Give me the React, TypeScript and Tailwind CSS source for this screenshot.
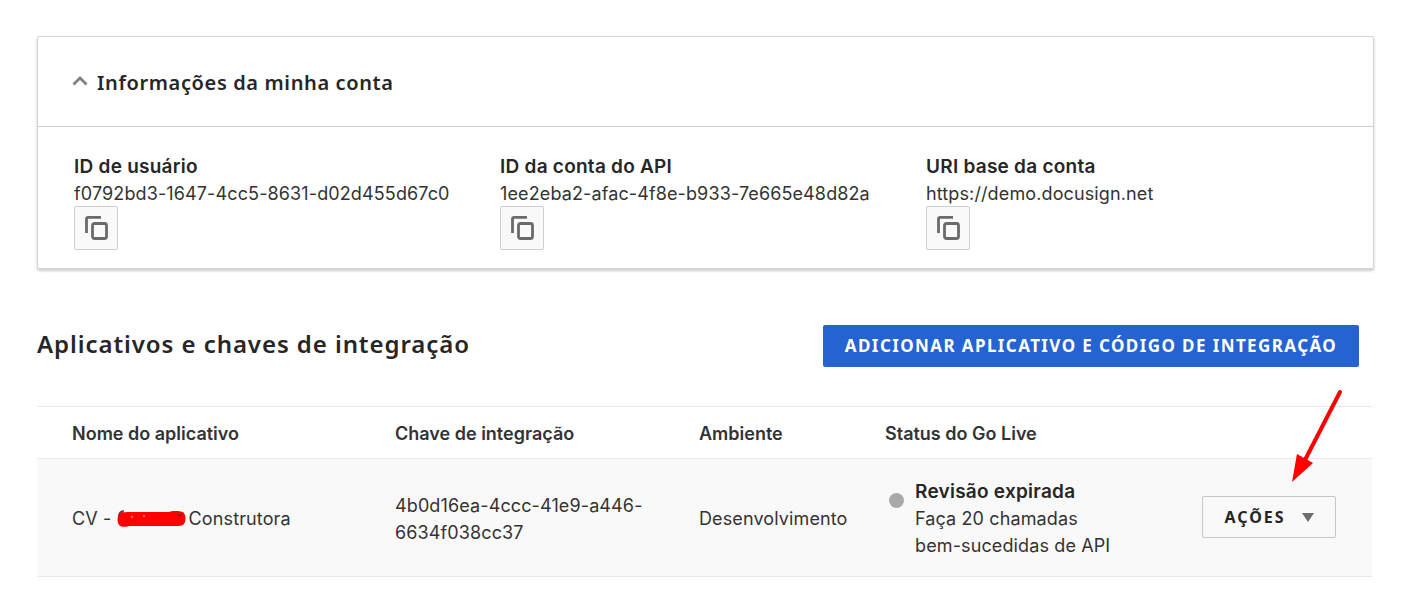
import React from 'react';

const bodyFont = "font-['Inter',Arial,sans-serif]";
const headingFont = "font-['Noto_Sans',sans-serif]";

function CopyIcon() {
    return (
        <svg width="23" height="24" viewBox="0 0 23 24" fill="none" stroke="#6a6a6a" strokeWidth="2.8">
            <path d="M1.5 17V2.9a1.5 1.5 0 0 1 1.5-1.5H16" />
            <rect x="7.5" y="7.5" width="14" height="15" rx="2" />
        </svg>
    );
}

function AccountField({ label, value }: { label: string; value: string }) {
    return (
        <div className="w-[426px] shrink-0">
            <div className="text-[19px] leading-[27px] font-semibold tracking-[0.25px] text-[#262626]">{label}</div>
            <div className="text-[18px] leading-[27px] tracking-[0.12px] text-[#333333]">{value}</div>
            <button className="w-[44px] h-[44px] -mt-[1px] flex items-center justify-center bg-[#f9f9f9] border border-[#d0cece] rounded-[2px]">
                <CopyIcon />
            </button>
        </div>
    );
}

export default function App() {
    return (
        <div className={`relative w-[1406px] h-[600px] overflow-hidden bg-white pt-[36px] pl-[37px] ${bodyFont}`}>
            {/* Account info card */}
            <div className="w-[1337px] h-[233px] bg-white border border-[#d5d3d3] rounded-[2px] shadow-[0_2px_3px_rgba(0,0,0,0.2)]">
                <div className="h-[90px] flex items-center pl-[34px] border-b border-[#cfcdcd]">
                    <svg width="16" height="10" viewBox="0 0 16 10" fill="none" stroke="#808080" strokeWidth="2.8" className="mr-[9px] mb-[2px]">
                        <path d="M1.5 8.5 8 2l6.5 6.5" />
                    </svg>
                    <h2 className={`text-[20px] font-semibold tracking-[0.63px] text-[#262626] mt-[2px] ${headingFont}`}>Informações da minha conta</h2>
                </div>
                <div className="flex pl-[36px] pt-[26px]">
                    <AccountField label="ID de usuário" value="f0792bd3-1647-4cc5-8631-d02d455d67c0" />
                    <AccountField label="ID da conta do API" value="1ee2eba2-afac-4f8e-b933-7e665e48d82a" />
                    <AccountField label="URI base da conta" value="https://demo.docusign.net" />
                </div>
            </div>

            {/* Section heading */}
            <div className="w-[1322px] h-[137px] flex items-center justify-between">
                <h2 className={`text-[24px] font-semibold tracking-[0.93px] text-[#262626] mt-[13px] ${headingFont}`}>Aplicativos e chaves de integração</h2>
                <button className={`h-[42px] w-[536px] mt-[16px] bg-[#2463d1] rounded-[2px] text-white text-[17px] font-bold tracking-[1.4px] ${headingFont}`}>
                    ADICIONAR APLICATIVO E CÓDIGO DE INTEGRAÇÃO
                </button>
            </div>

            {/* Apps table */}
            <div className="w-[1335px]">
                <div className="grid grid-cols-[323px_304px_186px_1fr] h-[53px] items-center pl-[35px] pt-[1px] border-y border-[#e9e9e9] text-[18px] font-semibold text-[#333333]">
                    <div>Nome do aplicativo</div>
                    <div>Chave de integração</div>
                    <div>Ambiente</div>
                    <div>Status do Go Live</div>
                </div>
                <div className="grid grid-cols-[323px_304px_186px_1fr] h-[118px] items-center pl-[35px] bg-[#f9f9f9] border-b border-[#e9e9e9] text-[18px] leading-[27px] tracking-[0.12px] text-[#333333]">
                    <div className="flex items-center pt-[2px]">
                        <span className="whitespace-pre">CV - </span>
                        <svg width="69" height="18" viewBox="0 0 69 18" className="mr-[3px] shrink-0">
                            <path d="M3 2.5C6 1 7 3 10 2h42c3-1.5 13-1.5 15 1 2 3 2 8 0 11-2 2-5 2-8 2H12c-4 1.5-8 1-10-1C0 12 0 5 3 2.5z" fill="#ff0000" />
                            <path d="M2 6c0-3 2-5 5-5" stroke="#444444" strokeWidth="1.4" fill="none" />
                            <path d="M60 5h5" stroke="#7a2020" strokeWidth="1.2" />
                            <path d="M14 7h2M26 6h2" stroke="#ffd0d0" strokeWidth="1" />
                        </svg>
                        <span>Construtora</span>
                    </div>
                    <div className="whitespace-nowrap pt-[2px]">4b0d16ea-4ccc-41e9-a446-<br />6634f038cc37</div>
                    <div className="pt-[2px]">Desenvolvimento</div>
                    <div className="flex items-start pt-[2px]">
                        <span className="w-[15px] h-[15px] rounded-full bg-[#a9a9a9] mr-[11px] ml-[4px] mt-[15px] shrink-0" />
                        <div className="w-[287px] shrink-0">
                            <div className="text-[19px] font-semibold text-[#262626] tracking-[0.25px]">Revisão expirada</div>
                            <div>Faça 20 chamadas</div>
                            <div>bem-sucedidas de API</div>
                        </div>
                        <button className={`w-[134px] h-[42px] mt-[18px] flex items-center justify-center gap-[16px] bg-[#f9f9f9] border border-[#c8c6c6] rounded-[2px] text-[16px] font-bold tracking-[2px] text-[#262626] ${headingFont}`}>
                            AÇÕES
                            <svg width="12" height="9" viewBox="0 0 12 9"><path d="M0 0h12L6 9z" fill="#6e6e6e" /></svg>
                        </button>
                    </div>
                </div>
            </div>

            {/* Annotation arrow */}
            <svg width="60" height="100" viewBox="0 0 60 100" className="absolute left-[1290px] top-[388px]">
                <path d="M50 4 15 72" stroke="#ff0000" strokeWidth="4" strokeLinecap="round" fill="none" />
                <path d="M2 94 7 66 23 75z" fill="#ff0000" />
            </svg>
        </div>
    );
}
